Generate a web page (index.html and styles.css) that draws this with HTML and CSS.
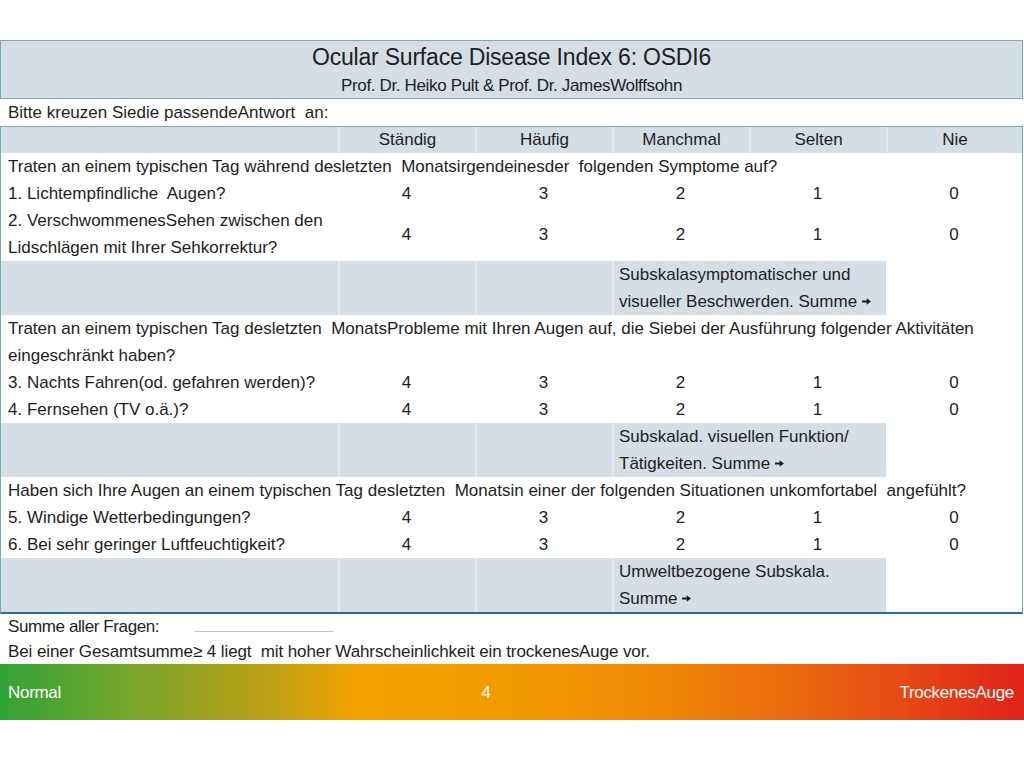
FILE: index.html
```html
<!DOCTYPE html>
<html lang="de">
<head>
<meta charset="utf-8">
<title>OSDI6</title>
<link rel="stylesheet" href="styles.css">
</head>
<body>
<main class="page">
  <header class="title-box">
    <h1 class="title">Ocular Surface Disease Index 6: OSDI6</h1>
    <p class="authors">Prof. Dr. Heiko Pult &amp; Prof. Dr. JamesWolffsohn</p>
  </header>
  <p class="instr">Bitte kreuzen Siedie passendeAntwort&nbsp; an:</p>
  <table class="osdi">
    <colgroup>
      <col class="c-q"><col class="c-a"><col class="c-a"><col class="c-a"><col class="c-a"><col>
    </colgroup>
    <thead>
      <tr class="head">
        <th></th><th>Ständig</th><th>Häufig</th><th>Manchmal</th><th>Selten</th><th>Nie</th>
      </tr>
    </thead>
    <tbody>
      <tr><td colspan="6" class="q">Traten an einem typischen Tag während desletzten&nbsp; Monatsirgendeinesder&nbsp; folgenden Symptome auf?</td></tr>
      <tr><td class="q">1. Lichtempfindliche&nbsp; Augen?</td><td>4</td><td>3</td><td>2</td><td>1</td><td>0</td></tr>
      <tr><td class="q">2. VerschwommenesSehen zwischen den<br>Lidschlägen mit Ihrer Sehkorrektur?</td><td>4</td><td>3</td><td>2</td><td>1</td><td>0</td></tr>
      <tr class="sub"><td></td><td></td><td></td><td colspan="2" class="sum">Subskalasymptomatischer und<br>visueller Beschwerden. Summe <svg class="arr" viewBox="0 0 10 7" width="9" height="7" aria-hidden="true"><path d="M0 2.3h5.2V0L10 3.5 5.2 7V4.7H0z"/></svg></td><td class="blank"></td></tr>
      <tr><td colspan="6" class="q">Traten an einem typischen Tag desletzten&nbsp; MonatsProbleme mit Ihren Augen auf, die Siebei der Ausführung folgender Aktivitäten<br>eingeschränkt haben?</td></tr>
      <tr><td class="q">3. Nachts Fahren(od. gefahren werden)?</td><td>4</td><td>3</td><td>2</td><td>1</td><td>0</td></tr>
      <tr><td class="q">4. Fernsehen (TV o.ä.)?</td><td>4</td><td>3</td><td>2</td><td>1</td><td>0</td></tr>
      <tr class="sub"><td></td><td></td><td></td><td colspan="2" class="sum">Subskalad. visuellen Funktion/<br>Tätigkeiten. Summe <svg class="arr" viewBox="0 0 10 7" width="9" height="7" aria-hidden="true"><path d="M0 2.3h5.2V0L10 3.5 5.2 7V4.7H0z"/></svg></td><td class="blank"></td></tr>
      <tr><td colspan="6" class="q">Haben sich Ihre Augen an einem typischen Tag desletzten&nbsp; Monatsin einer der folgenden Situationen unkomfortabel&nbsp; angefühlt?</td></tr>
      <tr><td class="q">5. Windige Wetterbedingungen?</td><td>4</td><td>3</td><td>2</td><td>1</td><td>0</td></tr>
      <tr><td class="q">6. Bei sehr geringer Luftfeuchtigkeit?</td><td>4</td><td>3</td><td>2</td><td>1</td><td>0</td></tr>
      <tr class="sub"><td></td><td></td><td></td><td colspan="2" class="sum">Umweltbezogene Subskala.<br>Summe <svg class="arr" viewBox="0 0 10 7" width="9" height="7" aria-hidden="true"><path d="M0 2.3h5.2V0L10 3.5 5.2 7V4.7H0z"/></svg></td><td class="blank"></td></tr>
    </tbody>
  </table>
  <div class="total">
    <span>Summe aller Fragen:</span>
    <span class="blank-line"></span>
  </div>
  <p class="note">Bei einer Gesamtsumme≥ 4 liegt&nbsp; mit hoher Wahrscheinlichkeit ein trockenesAuge vor.</p>
  <div class="scale">
    <span class="scale-left">Normal</span>
    <span class="scale-mid">4</span>
    <span class="scale-right">TrockenesAuge</span>
  </div>
</main>
</body>
</html>
```

FILE: styles.css
```css
* { box-sizing: border-box; }
html, body { margin: 0; padding: 0; background: #ffffff; }
body {
  font-family: "Liberation Sans", Arial, sans-serif;
  font-size: 17px;
  color: #1e1e1e;
}
.page {
  width: 1024px;
  padding-top: 40px;
}
.title-box {
  width: 1023px;
  background: #d5dde5;
  border: 1px solid #78abb8;
  padding-top: 2px;
  text-align: center;
}
.title {
  margin: 0;
  font-size: 23px;
  font-weight: normal;
  line-height: 28px;
  letter-spacing: -0.2px;
}
.authors {
  margin: 0;
  padding-top: 3px;
  font-size: 17px;
  line-height: 24px;
  letter-spacing: -0.35px;
}
.instr {
  margin: 0;
  padding-left: 8px;
  line-height: 27px;
}
.osdi {
  width: 1023px;
  table-layout: fixed;
  border-collapse: separate;
  border-spacing: 0;
  border-top: 1px solid #78abb8;
  border-left: 1px solid #78abb8;
  border-right: 1px solid #78abb8;
  border-bottom: 2px solid #2e6e90;
}
.c-q { width: 337px; }
.c-a { width: 137px; }
.osdi th, .osdi td {
  padding: 0;
  line-height: 27px;
  font-weight: normal;
  text-align: center;
  vertical-align: middle;
}
.osdi .head th {
  height: 26px;
  line-height: 26px;
  background: #d5dde5;
  border-left: 2px solid #e3e9ee;
}
.osdi .head th:first-child { border-left: 0; }
.osdi td.q {
  text-align: left;
  padding-left: 7px;
}
.osdi .sub td {
  background: #d5dde5;
  border-left: 2px solid #e3e9ee;
}
.osdi .sub td:first-child { border-left: 0; }
.osdi .sub td.blank {
  background: #ffffff;
  border-left: 0;
}
.osdi .sub td.sum {
  text-align: left;
  padding-left: 5px;
}
.arr {
  fill: #1e1e1e;
  vertical-align: 2px;
}
.total {
  display: flex;
  align-items: center;
  padding-left: 8px;
  height: 25px;
  letter-spacing: -0.4px;
}
.blank-line {
  width: 140px;
  height: 1px;
  margin-left: 35px;
  margin-top: 9px;
  background: #c4c4c4;
}
.note {
  margin: 0;
  padding-left: 8px;
  line-height: 25px;
  letter-spacing: -0.1px;
}
.scale {
  display: grid;
  grid-template-columns: 468px 20px 1fr;
  align-items: center;
  height: 56px;
  padding: 2px 10px 0 8px;
  color: #ffffff;
  font-size: 17px;
  letter-spacing: -0.3px;
  background: linear-gradient(to right,
    #31a437 0%,
    #7ea52a 14%,
    #c0a014 27%,
    #f4a300 35%,
    #f39a00 50%,
    #ef8508 66%,
    #e85a12 83%,
    #e0231a 100%);
}
.scale-mid { text-align: center; }
.scale-right { text-align: right; }
```
